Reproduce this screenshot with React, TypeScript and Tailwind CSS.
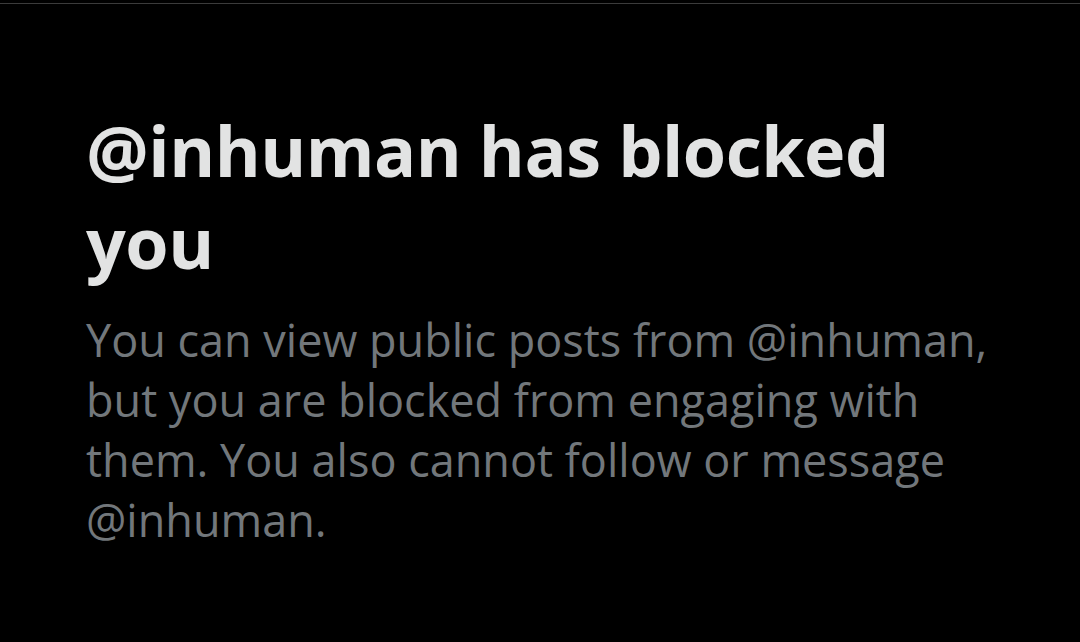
export default function App() {
  return (
    <div className="w-[1080px] h-[642px] bg-black overflow-hidden" style={{ fontFamily: '"Open Sans", "Noto Sans", sans-serif' }}>
      <div className="h-[3px]" />
      <div className="h-px bg-[#3b3b3b]" />
      <div className="pl-[86px] pt-[100px]">
        <h1 className="w-[920px] text-[70px] font-bold leading-[92px] text-[#e2e3e3] tracking-[-0.5px]">
          @inhuman has blocked you
        </h1>
        <p className="w-[960px] mt-[22px] text-[45px] leading-[60px] text-[#72777b]">
          You can view public posts from @inhuman, but you are blocked from engaging with them. You also cannot follow or message @inhuman.
        </p>
      </div>
    </div>
  );
}
